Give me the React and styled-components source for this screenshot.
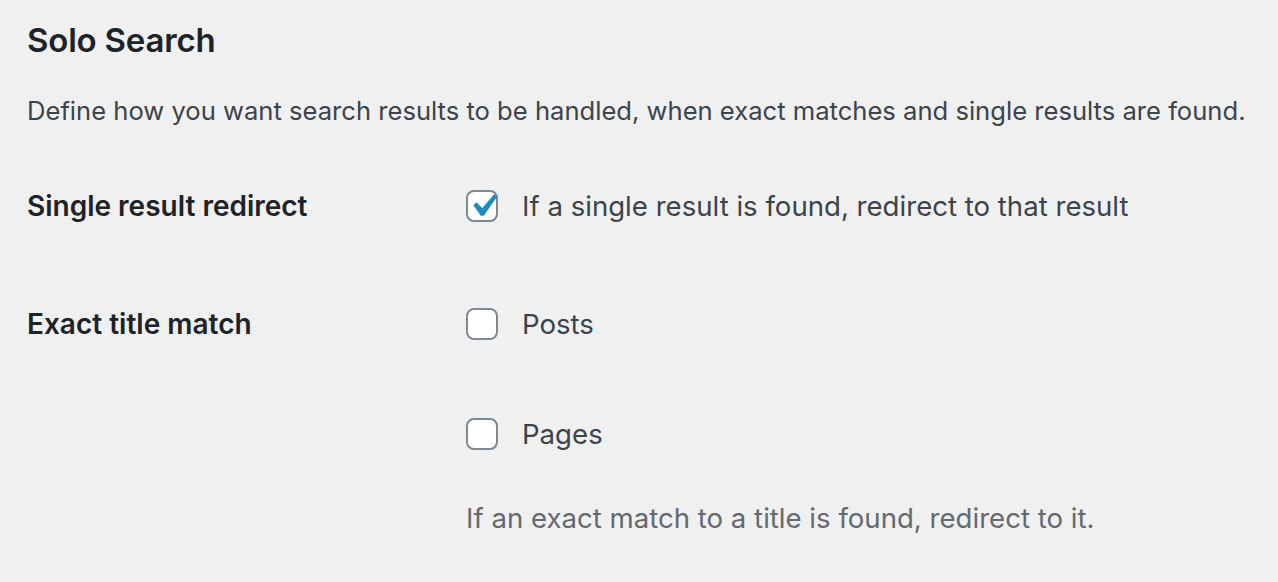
import React from "react";
import styled, { createGlobalStyle } from "styled-components";

const GlobalStyle = createGlobalStyle`
  html, body {
    margin: 0;
    padding: 0;
    background: #f0f0f1;
  }
  body {
    font-family: Inter, "Noto Sans", "Liberation Sans", sans-serif;
    color: #3c434a;
  }
`;

const Wrap = styled.div`
  padding: 18px 27px 0;
  box-sizing: border-box;
  width: 1278px;
  height: 582px;
  overflow: hidden;
`;

const Title = styled.h2`
  margin: 0;
  font-size: 33px;
  line-height: 44px;
  font-weight: 600;
  color: #1d2327;
  letter-spacing: -0.2px;
`;

const Intro = styled.p`
  margin: 29px 0 0;
  font-size: 25.6px;
  line-height: 40px;
  color: #3c434a;
`;

const Table = styled.div`
  margin-top: 57px;
  display: flex;
  flex-direction: column;
  gap: 82px;
`;

const Row = styled.div`
  display: flex;
  align-items: flex-start;
`;

const Th = styled.div`
  width: 420px;
  flex: none;
  font-size: 28px;
  line-height: 36px;
  font-weight: 600;
  color: #1d2327;
`;

const Td = styled.div`
  padding-left: 19px;
  display: flex;
  flex-direction: column;
  gap: 74px;
`;

const Option = styled.label`
  display: flex;
  align-items: center;
  gap: 24px;
  font-size: 27.6px;
  line-height: 36px;
  color: #3c434a;
`;

const Box = styled.span`
  width: 32px;
  height: 32px;
  box-sizing: border-box;
  border: 2px solid #7e8993;
  border-radius: 8px;
  background: #fff;
  display: flex;
  align-items: center;
  justify-content: center;
  flex: none;
  overflow: visible;
`;

const Hint = styled.p`
  margin: -26px 0 0;
  font-size: 27.6px;
  line-height: 36px;
  color: #646970;
`;

const Check = () => (
  <svg
    width="46"
    height="46"
    viewBox="0 0 20 20"
    aria-hidden="true"
    style={{ flex: "none", margin: "-7px -9px -7px -7px" }}
  >
    <path
      d="M14.83 4.89l1.34.94-5.81 8.38H9.02L5.78 9.67l1.34-1.25 2.57 2.4z"
      fill="#1e8cbe"
    />
  </svg>
);

const Checkbox = ({ label, checked }) => (
  <Option>
    <Box>{checked && <Check />}</Box>
    {label}
  </Option>
);

export default function App() {
  return (
    <Wrap>
      <GlobalStyle />
      <Title>Solo Search</Title>
      <Intro>
        Define how you want search results to be handled, when exact matches and single results are found.
      </Intro>
      <Table>
        <Row>
          <Th>Single result redirect</Th>
          <Td>
            <Checkbox checked label="If a single result is found, redirect to that result" />
          </Td>
        </Row>
        <Row>
          <Th>Exact title match</Th>
          <Td>
            <Checkbox label="Posts" />
            <Checkbox label="Pages" />
            <Hint>If an exact match to a title is found, redirect to it.</Hint>
          </Td>
        </Row>
      </Table>
    </Wrap>
  );
}
